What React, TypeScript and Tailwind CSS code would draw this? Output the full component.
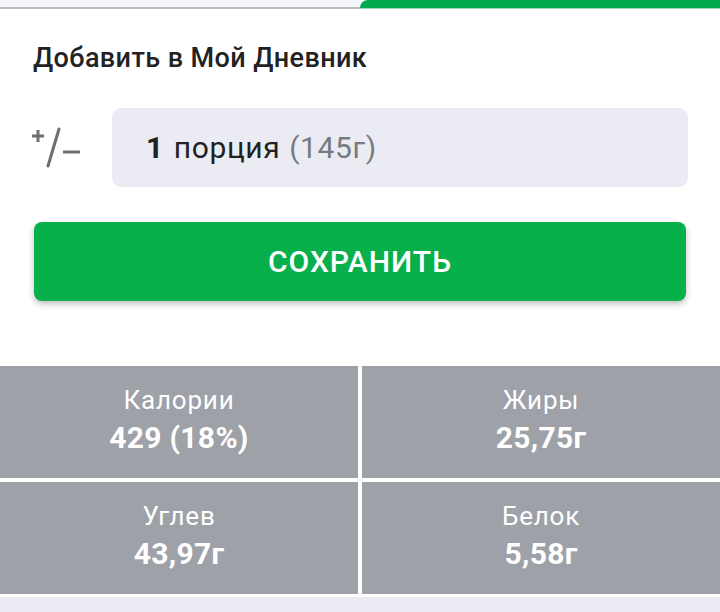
const stats = [
  { label: "Калории", value: "429 (18%)" },
  { label: "Жиры", value: "25,75г" },
  { label: "Углев", value: "43,97г" },
  { label: "Белок", value: "5,58г" },
];

// +/- icon drawn as strokes
const PlusMinus = () => (
  <svg width="56" height="48" viewBox="0 0 56 48" className="text-[#6e6e6e]">
    <g stroke="currentColor" strokeWidth="3" strokeLinecap="round" fill="none">
      <path d="M2 12h12M8 6v12" strokeWidth="3" strokeLinecap="butt" />
      <path d="M29 5L18 42" />
      <path d="M33 28h17" strokeLinecap="butt" />
    </g>
  </svg>
);

export default function App() {
  return (
    <div className="w-[720px] h-[612px] bg-white overflow-hidden font-['Roboto',sans-serif]">
      {/* top tabs strip */}
      <div className="flex h-[9px]">
        <div className="flex-1 bg-[#f4f6fa] border-b-2 border-[#b9bbc0]" />
        <div className="w-[360px] bg-[#00a94c] rounded-tl-[8px] border-b border-[#9fd9b6]" />
      </div>

      <div className="px-[33px] pt-[33px]">
        <h2 className="text-[27px] font-medium text-[#222222] leading-[33px] tracking-[0.4px]">Добавить в Мой Дневник</h2>
      </div>

      <div className="flex items-center pl-[30px] pr-[32px] mt-[33px]">
        <div className="w-[82px] flex items-center">
          <PlusMinus />
        </div>
        <div className="flex-1 h-[79px] bg-[#ebecf3] rounded-[9px] flex items-center pl-[34px] text-[30px] text-[#222222] tracking-[0.6px]">
          <span className="font-bold">1</span>
          <span className="ml-[10px]">порция</span>
          <span className="ml-[9px] text-[#777a80]">(145г)</span>
        </div>
      </div>

      <div className="px-[34px] pt-[35px]">
        <button className="w-full h-[79px] bg-[#07b04b] rounded-[8px] shadow-[0_3px_6px_rgba(0,0,0,0.25)] text-white text-[30px] font-medium tracking-[1px]">
          СОХРАНИТЬ
        </button>
      </div>

      <div className="mt-[65px] grid grid-cols-2 gap-[4px] bg-white pb-[3px]">
        {stats.map((s) => (
          <div key={s.label} className="h-[112px] bg-[#9ea1a8] flex flex-col items-center justify-center text-white pb-[4px]">
            <p className="text-[26px] leading-[34px] tracking-[0.8px]">{s.label}</p>
            <p className="text-[30px] font-bold leading-[38px] tracking-[0.3px] mt-[2px]">{s.value}</p>
          </div>
        ))}
      </div>
      <div className="h-[20px] bg-[#ebecf3]" />
    </div>
  );
}
